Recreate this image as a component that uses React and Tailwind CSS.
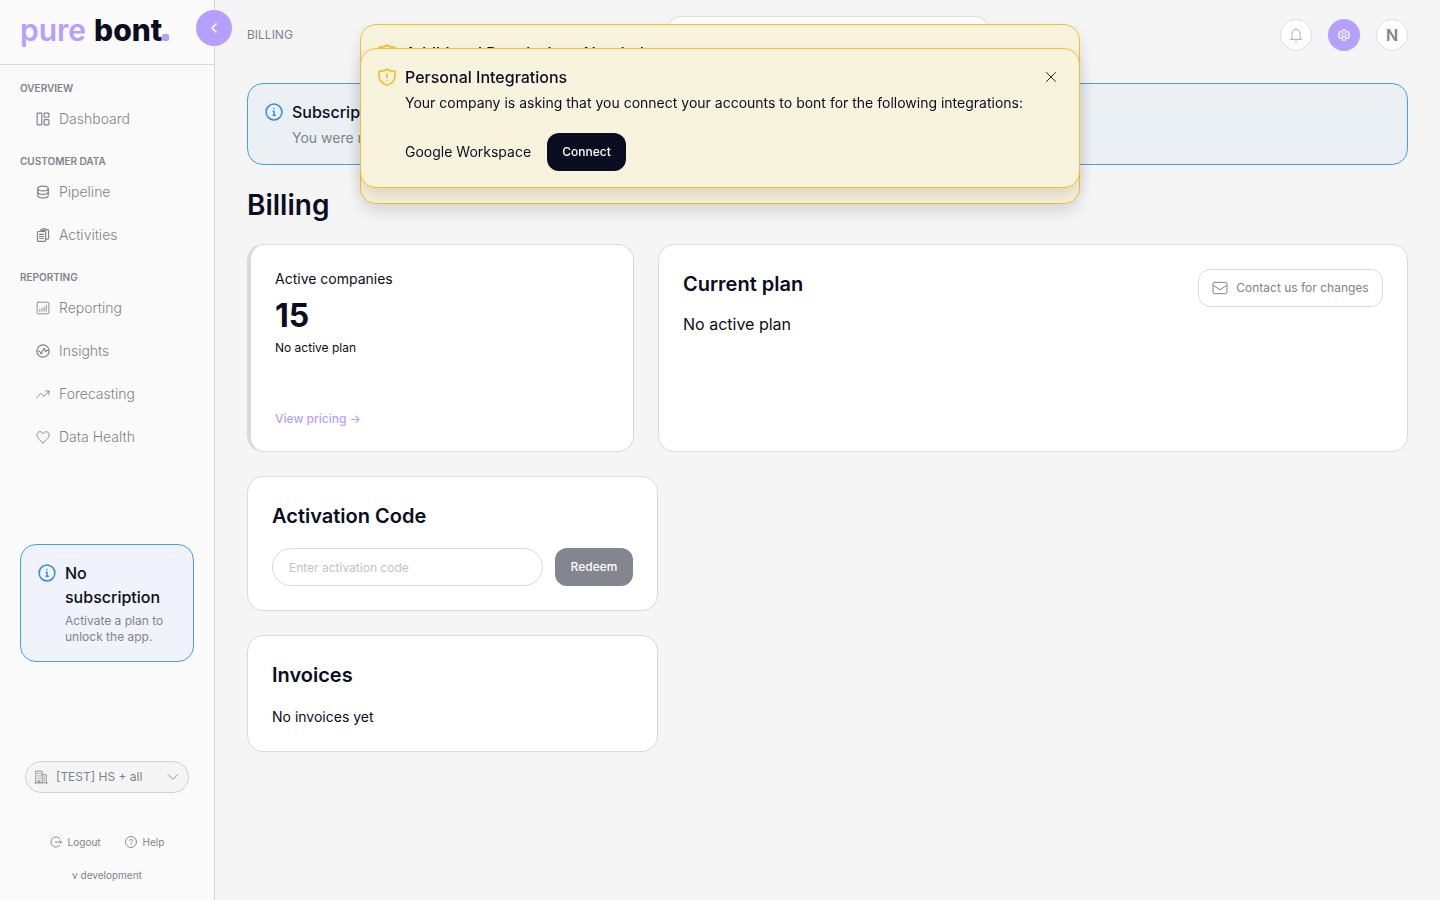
import React from "react";
import clsx from "clsx";

function Icon({ children, className, width = 1.5 }) {
  return (
    <svg
      viewBox="0 0 24 24"
      fill="none"
      stroke="currentColor"
      strokeWidth={width}
      strokeLinecap="round"
      strokeLinejoin="round"
      className={clsx("shrink-0", className)}
      aria-hidden="true"
    >
      {children}
    </svg>
  );
}

const icons = {
  dashboard: (
    <>
      <rect x="2" y="2" width="8" height="20" rx="1" />
      <rect x="14" y="2" width="8" height="7" rx="1" />
      <rect x="14" y="13" width="8" height="9" rx="1" />
    </>
  ),
  pipeline: (
    <>
      <ellipse cx="12" cy="6" rx="9" ry="4" />
      <path d="M3 6v12c0 2.200 4 4 9 4s9-1.800 9-4V6" />
      <path d="M3 12c0 2.200 4 4 9 4s9-1.800 9-4" />
    </>
  ),
  activities: (
    <>
      <path d="M8 6H4a1.500 1.500 0 0 0-1.500 1.500v14A1.500 1.500 0 0 0 4 23h11a1.500 1.500 0 0 0 1.500-1.500V19" />
      <path d="M10 3H8v3h7l1.500 2v11H20a1.500 1.500 0 0 0 1.500-1.500V4.500A1.500 1.500 0 0 0 20 3h-2" />
      <path d="M11 1.500h6v3h-6zM6 11h7M6 14.500h7M6 18h7" />
    </>
  ),
  reporting: (
    <>
      <rect x="2" y="2" width="20" height="20" rx="2" />
      <path d="M6.500 17.500v-3M10.200 17.500v-5M13.900 17.500v-7M17.600 17.500V7.500" />
    </>
  ),
  insights: (
    <>
      <circle cx="12" cy="12" r="10.500" />
      <path d="M2 12h4l3 5 4.500-9.500 3.500 5.500 1.500-2h3.500" />
    </>
  ),
  forecasting: (
    <>
      <path d="M1 19l7-8 5.500 5L22.500 7" />
      <path d="M16 6.500l6.500.5-.5 6.500" />
    </>
  ),
  health: (
    <path d="M12 22C8 18.500 1.500 14 1.500 8.500c0-3 2.200-5.500 5.200-5.500 2.300 0 4.300 1.300 5.300 3.500C13 4.300 15 3 17.300 3c3 0 5.200 2.500 5.200 5.500C22.500 14 16 18.500 12 22z" />
  ),
};

const sections = [
  {
    title: "OVERVIEW",
    items: [{ name: "Dashboard", icon: "dashboard", width: 2 }],
  },
  {
    title: "CUSTOMER DATA",
    items: [
      { name: "Pipeline", icon: "pipeline", width: 2 },
      { name: "Activities", icon: "activities", width: 2 },
    ],
  },
  {
    title: "REPORTING",
    items: [
      { name: "Reporting", icon: "reporting", width: 1.5 },
      { name: "Insights", icon: "insights", width: 2 },
      { name: "Forecasting", icon: "forecasting", width: 1.5 },
      { name: "Data Health", icon: "health", width: 1.5 },
    ],
  },
];

function InfoIcon() {
  return (
    <Icon className="h-5 w-5 text-[#2f8fe6]" width={1.8}>
      <circle cx="12" cy="12" r="9.5" />
      <path d="M11 11h1v5M11 16h2.500M12 7.800v.2" />
    </Icon>
  );
}

function ShieldIcon() {
  return (
    <Icon className="h-5 w-5 text-[#f5b914]" width={1.8}>
      <path d="M12 2.500c2 1.700 5 2.500 9.500 2.500v6.500c0 5-4 8.500-9.500 10.500-5.500-2-9.500-5.500-9.500-10.500V5C7 5 10 4.200 12 2.500z" />
      <path d="M12 8v4.500M12 16v.2" />
    </Icon>
  );
}

function Logo() {
  return (
    <a href="#" aria-label="pure bont" className="flex items-baseline text-[30px] leading-9">
      <span className="font-semibold text-[#b59fff]">pure</span>
      <span className="ml-2 font-extrabold text-[#0a0d20]">bont</span>
      <span className="h-[7px] w-[7px] rounded-xs bg-[#b59fff]" />
    </a>
  );
}

function Sidebar() {
  return (
    <aside className="relative flex w-[215px] shrink-0 flex-col border-r border-[#d5d5da] bg-[#fafafa] text-[#81828e]">
      <div className="flex h-[65px] items-center border-b border-[#d5d5da] px-5 pb-1">
        <Logo />
      </div>
      <button
        aria-label="Collapse sidebar"
        className="absolute top-2.5 -right-[18px] flex h-9 w-9 items-center justify-center rounded-full bg-[#b59fff] text-white"
      >
        <Icon className="h-4 w-4" width={2.5}>
          <path d="M15 6l-6 6 6 6" />
        </Icon>
      </button>

      <div className="flex flex-1 flex-col justify-between px-5 pt-[13px]">
        <nav className="flex flex-col gap-2.5">
          {sections.map((section) => (
            <div key={section.title}>
              <div className="text-[10px] leading-5 font-semibold">{section.title}</div>
              {section.items.map((item) => (
                <a key={item.name} href="#" className="flex h-[43px] items-center gap-2 pb-0.5 pl-4 text-sm font-light">
                  <Icon className="h-3.5 w-3.5" width={item.width}>
                    {icons[item.icon]}
                  </Icon>
                  <span className="pl-px">{item.name}</span>
                </a>
              ))}
            </div>
          ))}
        </nav>

        <div className="flex gap-2 rounded-2xl border border-[#4a9ee8] bg-[#f0f3fb] p-4">
          <div className="pt-0.5">
            <InfoIcon />
          </div>
          <div>
            <div className="font-medium text-[#0a0d20]">No subscription</div>
            <p className="mt-1 text-xs">Activate a plan to unlock the app.</p>
          </div>
        </div>

        <div className="px-[5px] pt-[15px] pb-[17px]">
          <div className="flex h-8 items-center rounded-full border border-[#d0d0d6] bg-[#f5f5f5] px-2">
            <Icon className="h-3.5 w-3.5" width={1.5}>
              <path d="M3 22V2h11v20M14 8h7v14M1 22h22M7 22v-4h3v4" />
              <path d="M6.500 6h1M10 6h1M6.500 10h1M10 10h1M6.500 14h1M10 14h1M17 12h1M17 15h1M17 18h1" />
            </Icon>
            <select
              aria-label="Company"
              className="ml-2 min-w-0 flex-1 appearance-none bg-transparent text-xs outline-none"
            >
              <option>[TEST] HS + all</option>
            </select>
            <Icon className="pointer-events-none h-3.5 w-3.5" width={1.5}>
              <path d="M4 8l8 8 8-8" />
            </Icon>
          </div>
          <div className="mt-[41px] flex justify-center gap-6 text-[10px] leading-4">
            <button className="flex items-center gap-1.5">
              <Icon className="h-3 w-3" width={1.8}>
                <path d="M20 5.500a10.200 10.200 0 1 0 0 13M11 12h12M20 9.500l3 2.500-3 2.500" />
              </Icon>
              Logout
            </button>
            <a href="#" className="flex items-center gap-1.5">
              <Icon className="h-3 w-3" width={1.8}>
                <circle cx="12" cy="12" r="11" />
                <path d="M9 9.500a3 3 0 1 1 4.500 2.600c-1 .6-1.500 1-1.500 2.100M12 17.300v.2" />
              </Icon>
              Help
            </a>
          </div>
          <div className="mt-[17px] text-center text-[10px] leading-4">v development</div>
        </div>
      </div>
    </aside>
  );
}

function Header() {
  return (
    <header className="grid h-[70px] grid-cols-[1fr_320px_1fr] items-center">
      <span className="text-xs text-[#81828e]">BILLING</span>
      <input
        type="search"
        aria-label="Search"
        className="h-[38px] rounded-xl border border-[#dcdce0] bg-white px-4 text-xs outline-none"
      />
      <div className="flex items-center justify-end gap-4">
        <button
          aria-label="Notifications"
          className="flex h-8 w-8 items-center justify-center rounded-full border border-[#dcdce0] bg-white text-[#bcbcc3]"
        >
          <Icon className="h-4 w-4" width={1.8}>
            <path d="M3.500 18.500h17M6 18.500V10a6 6 0 0 1 12 0v8.500M12 4V2M11 21.500h2" />
          </Icon>
        </button>
        <button
          aria-label="Settings"
          className="flex h-8 w-8 items-center justify-center rounded-full bg-[#b59fff] text-white"
        >
          <Icon className="h-3 w-3" width={2.2}>
            <circle cx="12" cy="12" r="4" />
            <path d="M9.500 1.500h5l.8 3.500 2.200 1.300 3.500-1 2.300 4.200-2.600 2.500 2.600 2.500-2.300 4.200-3.500-1-2.200 1.300-.8 3.500h-5L8.700 19l-2.200-1.300-3.500 1L.7 14.500 3.300 12 .7 9.500 3 5.300l3.500 1L8.700 5z" />
          </Icon>
        </button>
        <button
          aria-label="Account"
          className="flex h-8 w-8 items-center justify-center rounded-full border border-[#dcdce0] bg-white font-semibold text-[#81828e]"
        >
          N
        </button>
      </div>
    </header>
  );
}

function Card({ className, children }) {
  return <section className={clsx("rounded-2xl border border-[#dadade] bg-white p-6", className)}>{children}</section>;
}

function CardTitle({ children }) {
  return <h2 className="text-xl leading-[30px] font-semibold">{children}</h2>;
}

function Toast({ title, className, children }) {
  return (
    <div
      role="alert"
      className={clsx(
        "col-start-1 row-start-1 flex gap-2 self-start rounded-2xl border border-[#f5c030] bg-[#f8f3dc] p-4 shadow-[0_8px_16px_rgba(0,0,0,0.12)]",
        className
      )}
    >
      <div className="pt-0.5">
        <ShieldIcon />
      </div>
      <div className="flex-1 text-sm">
        <div className="flex items-center justify-between text-base font-medium">
          {title}
          <button aria-label="Close" className="flex h-6 w-6 items-center justify-center">
            <Icon className="h-3 w-3" width={1.8}>
              <path d="M3 3l18 18M21 3L3 21" />
            </Icon>
          </button>
        </div>
        {children}
      </div>
    </div>
  );
}

export default function App() {
  return (
    <div className="flex min-h-screen bg-[#f5f5f5] font-['Inter',sans-serif] text-[#0a0d20]">
      <Sidebar />

      <main className="min-w-0 flex-1 px-8 pb-8">
        <Header />

        <div className="mt-[13px] flex gap-2 rounded-2xl border border-[#4a9ee8] bg-[#ebf0f5] p-4">
          <div className="pt-0.5">
            <InfoIcon />
          </div>
          <div>
            <div className="font-medium">Subscription</div>
            <p className="mt-1 text-sm text-[#81828e]">You were redirected</p>
          </div>
        </div>

        <h1 className="mt-5 mb-[19px] text-[28px] leading-10 font-semibold">Billing</h1>

        <div className="flex">
          <Card className="flex h-52 w-1/3 flex-col border-l-4">
            <div className="text-sm">Active companies</div>
            <div className="mt-[3px] text-[32px] leading-12 font-bold">15</div>
            <div className="text-xs">No active plan</div>
            <a href="#" className="mt-auto text-xs font-medium text-[#b59fff]">
              View pricing →
            </a>
          </Card>
          <Card className="ml-6 flex flex-1 items-start justify-between">
            <div>
              <CardTitle>Current plan</CardTitle>
              <p className="mt-[13px]">No active plan</p>
            </div>
            <button className="flex h-[38px] w-[185px] items-center justify-center gap-2 rounded-xl border border-[#dadade] text-xs text-[#81828e]">
              <Icon className="h-4 w-4">
                <rect x="1.5" y="3.500" width="21" height="17" rx="2.500" />
                <path d="M2.500 8.500L12 14.500l9.500-6" />
              </Icon>
              Contact us for changes
            </button>
          </Card>
        </div>

        <Card className="mt-6 w-full max-w-[411px]">
          <CardTitle>Activation Code</CardTitle>
          <form className="mt-[17px] flex gap-3">
            <input
              type="text"
              aria-label="Activation code"
              placeholder="Enter activation code"
              className="h-[38px] min-w-0 flex-1 rounded-full border border-[#dadade] px-4 text-xs outline-none placeholder:text-[#c2c2c8]"
            />
            <button
              type="button"
              className="h-[38px] w-[78px] rounded-xl bg-[#84858f] text-xs font-medium text-white"
            >
              Redeem
            </button>
          </form>
        </Card>

        <Card className="mt-6 w-full max-w-[411px]">
          <CardTitle>Invoices</CardTitle>
          <p className="mt-[17px] text-sm">No invoices yet</p>
        </Card>
      </main>

      {/* stacked toasts, newest in front */}
      <div className="fixed inset-x-0 top-6 z-50 mx-auto grid w-full max-w-[720px]">
        <Toast title="Additional Permissions Needed" className="h-[180px]" />
        <Toast title="Personal Integrations" className="mt-6">
          <p className="mt-1">
            Your company is asking that you connect your accounts to bont for the following integrations:
          </p>
          <div className="mt-5 flex items-center gap-4">
            Google Workspace
            <button className="h-[38px] w-[79px] rounded-xl bg-[#0a0d20] text-xs font-medium text-white">
              Connect
            </button>
          </div>
        </Toast>
      </div>
    </div>
  );
}
